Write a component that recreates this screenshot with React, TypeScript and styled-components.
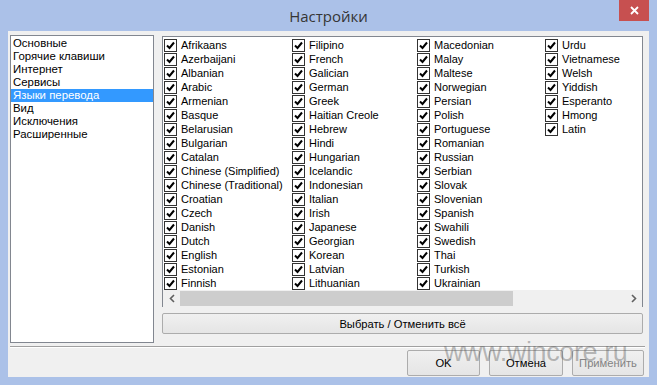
import * as React from "react";
import styled, { createGlobalStyle } from "styled-components";

const GlobalStyle = createGlobalStyle`
    html, body {
        margin: 0;
        padding: 0;
        background: #abc1e8;
    }
    body {
        font-family: "Liberation Sans", Arial, sans-serif;
    }
`;

const columns: string[][] = [
    [
        "Afrikaans", "Azerbaijani", "Albanian", "Arabic", "Armenian", "Basque", "Belarusian",
        "Bulgarian", "Catalan", "Chinese (Simplified)", "Chinese (Traditional)", "Croatian",
        "Czech", "Danish", "Dutch", "English", "Estonian", "Finnish",
    ],
    [
        "Filipino", "French", "Galician", "German", "Greek", "Haitian Creole", "Hebrew", "Hindi",
        "Hungarian", "Icelandic", "Indonesian", "Italian", "Irish", "Japanese", "Georgian",
        "Korean", "Latvian", "Lithuanian",
    ],
    [
        "Macedonian", "Malay", "Maltese", "Norwegian", "Persian", "Polish", "Portuguese",
        "Romanian", "Russian", "Serbian", "Slovak", "Slovenian", "Spanish", "Swahili", "Swedish",
        "Thai", "Turkish", "Ukrainian",
    ],
    ["Urdu", "Vietnamese", "Welsh", "Yiddish", "Esperanto", "Hmong", "Latin"],
];

const sections = [
    "Основные",
    "Горячие клавиши",
    "Интернет",
    "Сервисы",
    "Языки перевода",
    "Вид",
    "Исключения",
    "Расширенные",
];

const columnWidths = [128, 125, 128, 90];

const Frame = styled.div`
    width: 657px;
    height: 385px;
    background: #abc1e8;
    display: flex;
    flex-direction: column;
    overflow: hidden;
`;

const TitleBar = styled.div`
    position: relative;
    height: 31px;
    display: flex;
    align-items: center;
    justify-content: center;
`;

const Title = styled.div`
    font-family: "Open Sans", "Liberation Sans", sans-serif;
    font-size: 15px;
    color: #353535;
    margin-top: 1px;
`;

const CloseButton = styled.div`
    position: absolute;
    top: 0;
    right: 8px;
    width: 30px;
    height: 21px;
    background: #c75050;
    display: flex;
    align-items: center;
    justify-content: center;
`;

const Client = styled.div`
    margin: 0 8px;
    height: 346px;
    background: #f0f0f0;
    display: flex;
    flex-direction: column;
    position: relative;
`;

const Main = styled.div`
    display: flex;
    padding: 4px 0 0 2px;
    height: 307px;
`;

const SectionList = styled.div`
    width: 142px;
    height: 305px;
    border: 1px solid #828790;
    background: #fff;
    padding-top: 1px;
    box-sizing: content-box;
`;

const SectionItem = styled.div<{ $selected?: boolean }>`
    height: 13px;
    line-height: 13px;
    font-size: 11.4px;
    padding-left: 2px;
    color: ${(p) => (p.$selected ? "#fff" : "#000")};
    background: ${(p) => (p.$selected ? "#3399ff" : "transparent")};
    white-space: nowrap;
`;

const RightColumn = styled.div`
    margin-left: 8px;
    margin-top: 1px;
    width: 481px;
    display: flex;
    flex-direction: column;
    gap: 6px;
`;

const LanguagePanel = styled.div`
    height: 269px;
    border: 1px solid #828790;
    background: #fff;
    display: flex;
    flex-direction: column;
`;

const Columns = styled.div`
    flex: 1;
    display: flex;
    padding: 1px 0 0 1px;
`;

const Column = styled.div<{ $width: number }>`
    width: ${(p) => p.$width}px;
    display: flex;
    flex-direction: column;
`;

const LangRow = styled.div`
    height: 14px;
    display: flex;
    align-items: center;
    font-size: 11px;
    color: #000;
    white-space: nowrap;
`;

const Box = styled.span`
    width: 11px;
    height: 11px;
    border: 1px solid #333;
    background: #fff;
    margin-right: 4px;
    display: flex;
    align-items: center;
    justify-content: center;
    flex-shrink: 0;
`;

const HScroll = styled.div`
    height: 17px;
    display: flex;
    align-items: center;
    background: #f0f0f0;
`;

const ScrollArrow = styled.div`
    width: 17px;
    height: 17px;
    display: flex;
    align-items: center;
    justify-content: center;
`;

const ScrollTrack = styled.div`
    flex: 1;
    height: 15px;
    display: flex;
`;

const ScrollThumb = styled.div`
    width: 333px;
    height: 15px;
    background: #cdcdcd;
`;

const PushButton = styled.button<{ $width?: number; $disabled?: boolean }>`
    width: ${(p) => (p.$width ? `${p.$width}px` : "100%")};
    height: ${(p) => (p.$width ? 26 : 21)}px;
    border: 1px solid #acacac;
    border-radius: 2px;
    background: linear-gradient(#f0f0f0, #e5e5e5);
    font-family: "Liberation Sans", Arial, sans-serif;
    font-size: 11.2px;
    color: ${(p) => (p.$disabled ? "#838383" : "#000")};
    padding: 0;
    display: flex;
    align-items: center;
    justify-content: center;
`;

const Separator = styled.div`
    margin: 4px 4px 0 2px;
    border-top: 1px solid #a0a0a0;
    border-bottom: 1px solid #fff;
`;

const ButtonRow = styled.div`
    display: flex;
    justify-content: flex-end;
    gap: 9px;
    padding: 2px 5px 0 0;
`;

const Watermark = styled.div`
    position: absolute;
    left: 436px;
    top: 306px;
    font-family: "Liberation Sans", sans-serif;
    font-size: 27px;
    letter-spacing: -0.4px;
    color: rgba(95, 95, 95, 0.42);
    pointer-events: none;
    white-space: nowrap;
`;

const Check = () => (
    <svg width="9" height="9" viewBox="0 0 9 9">
        <path d="M1 4.5 L3.5 7 L8 1.5" stroke="#000" strokeWidth="2" fill="none" />
    </svg>
);

const Chevron = ({ dir }: { dir: "left" | "right" }) => (
    <svg width="6" height="9" viewBox="0 0 6 9">
        <path
            d={dir === "left" ? "M5 1 L1.5 4.5 L5 8" : "M1 1 L4.5 4.5 L1 8"}
            stroke="#606060"
            strokeWidth="1.6"
            fill="none"
        />
    </svg>
);

const App = () => (
    <>
        <GlobalStyle />
        <Frame>
            <TitleBar>
                <Title>Настройки</Title>
                <CloseButton>
                    <svg width="9" height="9" viewBox="0 0 9 9">
                        <path d="M1 1 L8 8 M8 1 L1 8" stroke="#fff" strokeWidth="1.8" />
                    </svg>
                </CloseButton>
            </TitleBar>
            <Client>
                <Main>
                    <SectionList>
                        {sections.map((s) => (
                            <SectionItem key={s} $selected={s === "Языки перевода"}>
                                {s}
                            </SectionItem>
                        ))}
                    </SectionList>
                    <RightColumn>
                        <LanguagePanel>
                            <Columns>
                                {columns.map((col, i) => (
                                    <Column key={i} $width={columnWidths[i]}>
                                        {col.map((lang) => (
                                            <LangRow key={lang}>
                                                <Box>
                                                    <Check />
                                                </Box>
                                                {lang}
                                            </LangRow>
                                        ))}
                                    </Column>
                                ))}
                            </Columns>
                            <HScroll>
                                <ScrollArrow>
                                    <Chevron dir="left" />
                                </ScrollArrow>
                                <ScrollTrack>
                                    <ScrollThumb />
                                </ScrollTrack>
                                <ScrollArrow>
                                    <Chevron dir="right" />
                                </ScrollArrow>
                            </HScroll>
                        </LanguagePanel>
                        <PushButton>Выбрать / Отменить всё</PushButton>
                    </RightColumn>
                </Main>
                <Separator />
                <ButtonRow>
                    <PushButton $width={73}>OK</PushButton>
                    <PushButton $width={74}>Отмена</PushButton>
                    <PushButton $width={72} $disabled>
                        Применить
                    </PushButton>
                </ButtonRow>
                <Watermark>www.wincore.ru</Watermark>
            </Client>
        </Frame>
    </>
);

export default App;
